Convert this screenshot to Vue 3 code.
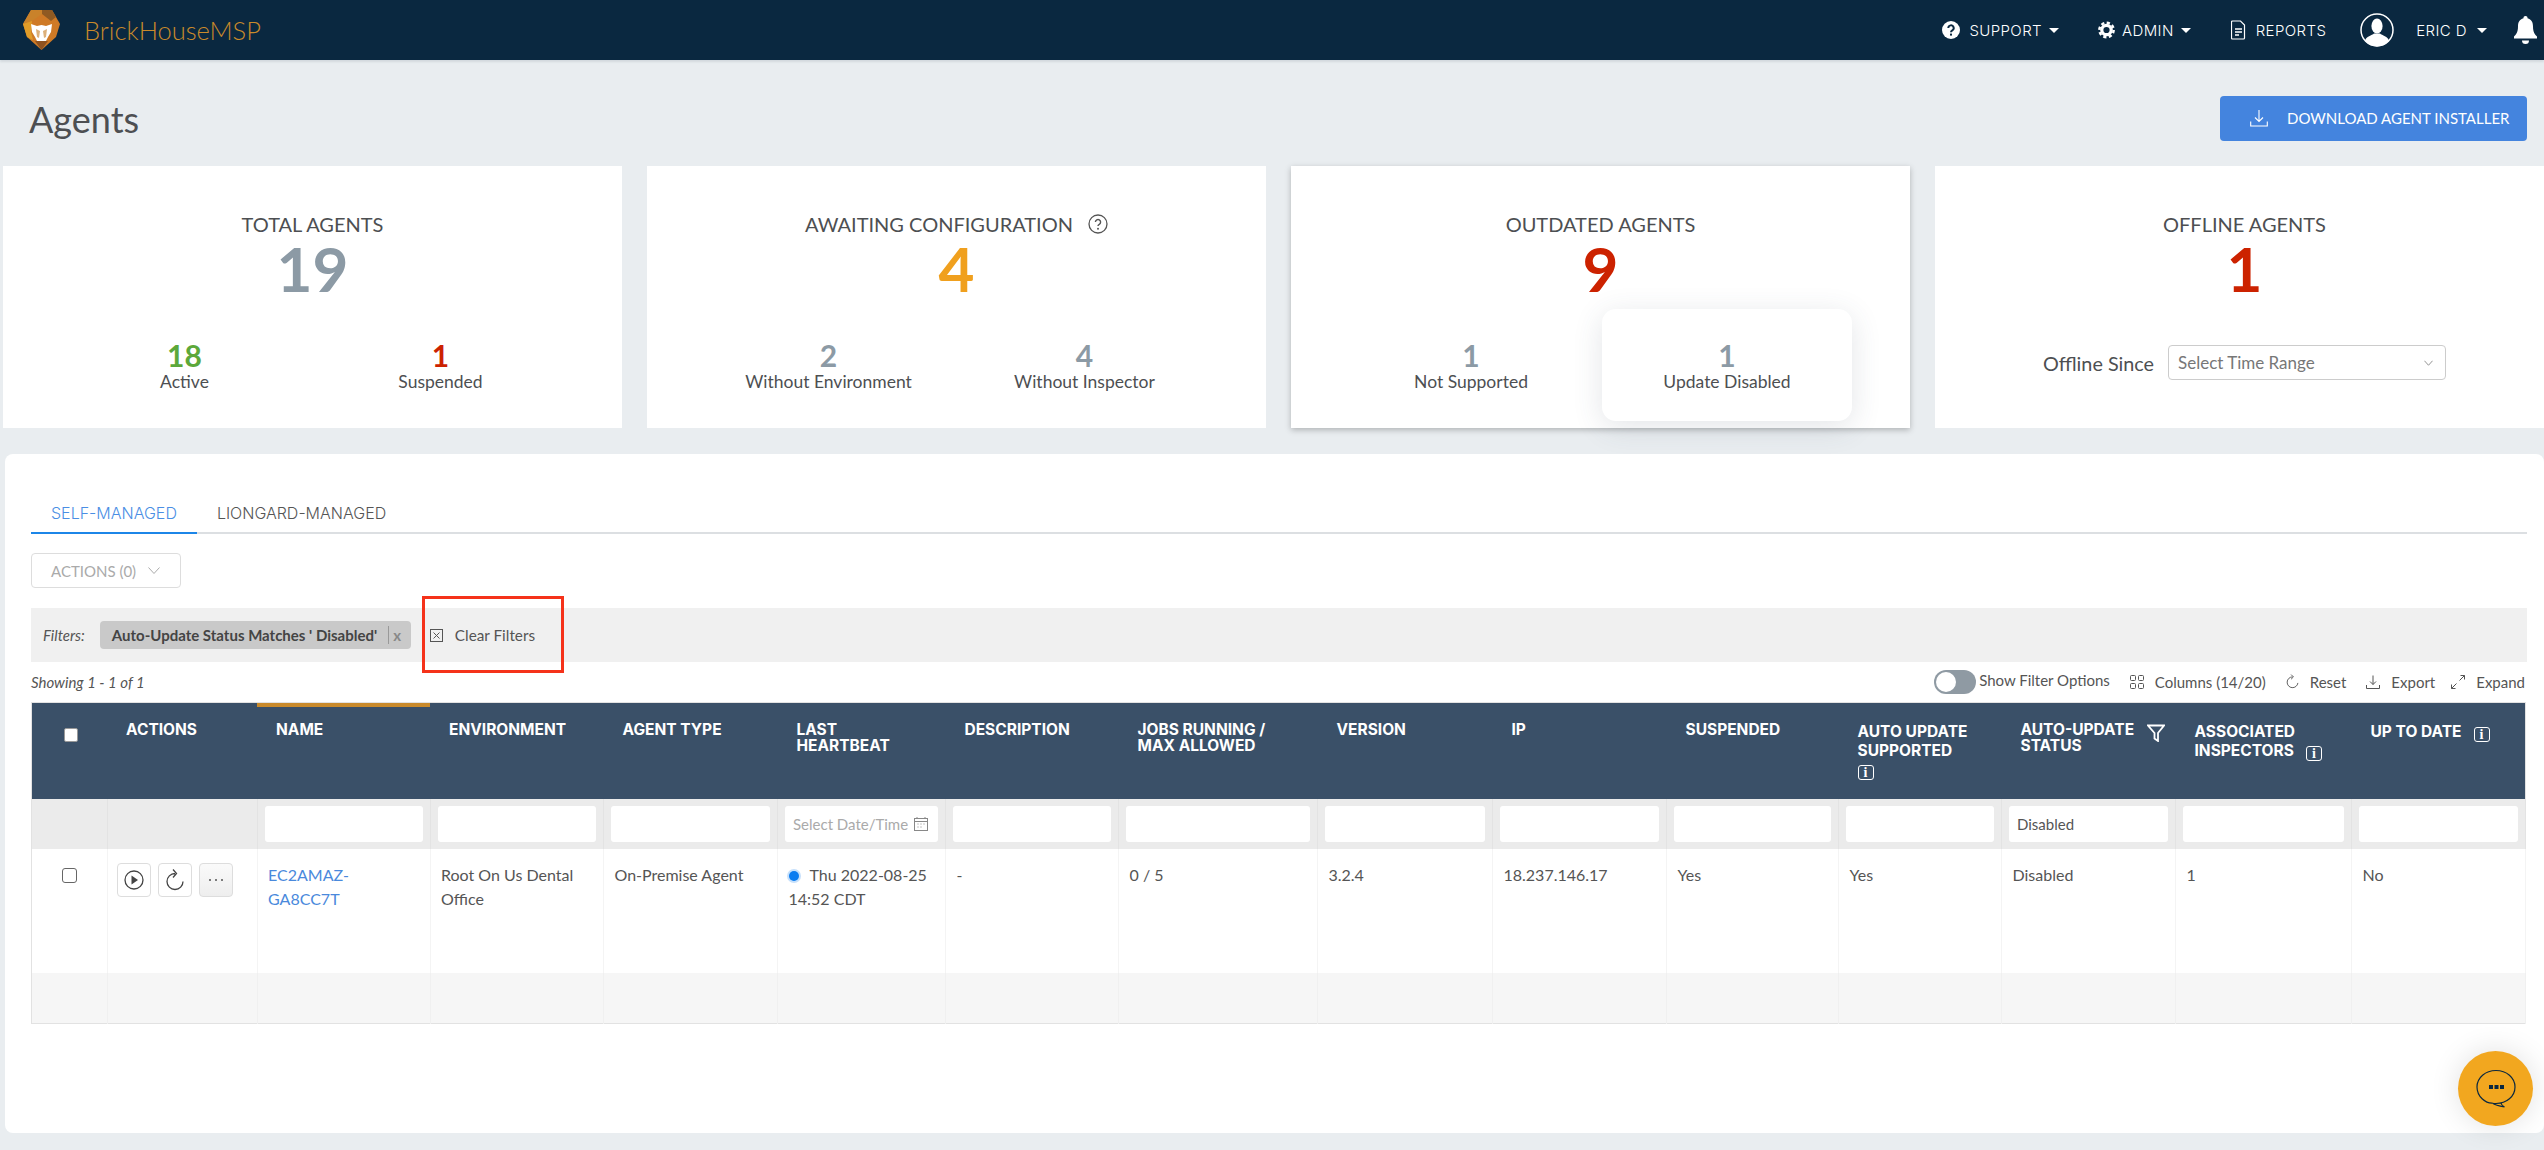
<script setup>
// Table columns: width in px and the header label lines
const columns = [
  { key: 'check', width: 75.5, lines: [] },
  { key: 'actions', width: 150, lines: ['ACTIONS'] },
  { key: 'name', width: 173, lines: ['NAME'], sorted: true, filter: '' },
  { key: 'env', width: 173.5, lines: ['ENVIRONMENT'], filter: '' },
  { key: 'type', width: 174, lines: ['AGENT TYPE'], filter: '' },
  { key: 'heartbeat', width: 168, lines: ['LAST', 'HEARTBEAT'], date: true },
  { key: 'desc', width: 173, lines: ['DESCRIPTION'], filter: '' },
  { key: 'jobs', width: 199, lines: ['JOBS RUNNING /', 'MAX ALLOWED'], filter: '' },
  { key: 'version', width: 175, lines: ['VERSION'], filter: '' },
  { key: 'ip', width: 174, lines: ['IP'], filter: '' },
  { key: 'suspended', width: 172, lines: ['SUSPENDED'], filter: '' },
  { key: 'supported', width: 163, lines: ['AUTO UPDATE', 'SUPPORTED'], info: 'below', tall: true, filter: '' },
  { key: 'status', width: 174, lines: ['AUTO-UPDATE', 'STATUS'], funnel: true, filter: 'Disabled' },
  { key: 'inspectors', width: 176, lines: ['ASSOCIATED', 'INSPECTORS'], info: 'inline', tall: true, filter: '' },
  { key: 'uptodate', width: 174, lines: ['UP TO DATE'], info: 'inline', tall: true, filter: '' }
]

const plainCells = [
  { key: 'env', lines: ['Root On Us Dental', 'Office'] },
  { key: 'type', lines: ['On-Premise Agent'] }
]

const restCells = ['-', '0 / 5', '3.2.4', '18.237.146.17', 'Yes', 'Yes', 'Disabled', '1', 'No']

const cards = [
  { title: 'TOTAL AGENTS', value: 19, tone: 'grey', subs: [
    { value: 18, label: 'Active', tone: 'green' },
    { value: 1, label: 'Suspended', tone: 'red' }
  ] },
  { title: 'AWAITING CONFIGURATION', help: true, value: 4, tone: 'orange', subs: [
    { value: 2, label: 'Without Environment', tone: 'grey' },
    { value: 4, label: 'Without Inspector', tone: 'grey' }
  ] },
  { title: 'OUTDATED AGENTS', value: 9, tone: 'red', raised: true, subs: [
    { value: 1, label: 'Not Supported', tone: 'grey' },
    { value: 1, label: 'Update Disabled', tone: 'grey', active: true }
  ] },
  { title: 'OFFLINE AGENTS', value: 1, tone: 'red', offline: true }
]
</script>

<template>
  <div class="page">
    <header class="nav">
      <svg class="logo" viewBox="0 0 37 40" width="37" height="40">
        <polygon points="8,0 29,0 37,14 33,27 18.500,40 4,27 0,14" fill="#cf7a26" />
        <polygon points="8,0 19,0 19,4 9,11 0,14" fill="#c9822a" />
        <polygon points="19,0 29,0 33,7 28,11 19,4" fill="#8f5a22" />
        <polygon points="0,14 9,11 8,22 10,30 4,27" fill="#e09c28" />
        <polygon points="12,31 25,31 18.500,40" fill="#8f5220" />
        <polygon points="8,14 14,16 18.500,15 23,16 29,14 28,22 25,27 23,31 14,31 12,27 9,22" fill="#fff" />
        <polygon points="13,19 17,21 16,28 14,27" fill="#dcb07a" />
        <polygon points="24,19 20,21 21,28 23,27" fill="#dcb07a" />
      </svg>
      <span class="brand">BrickHouseMSP</span>
      <nav class="nav-right">
        <svg class="nav-ico i-support" viewBox="0 0 18 18" width="18" height="18">
          <circle cx="9" cy="9" r="9" fill="#fff" />
          <path d="M6.300 7a2.700 2.700 0 1 1 4 2.400c-.9.500-1.300 1-1.300 1.900" fill="none" stroke="#0a2840" stroke-width="2" />
          <rect x="8" y="12.600" width="2" height="2" fill="#0a2840" />
        </svg>
        <span class="nav-text t-support">SUPPORT</span>
        <i class="caret"></i>
        <svg class="nav-ico i-admin" viewBox="0 0 18 18" width="17" height="18">
          <circle cx="9" cy="9" r="5" fill="none" stroke="#fff" stroke-width="3.400" />
          <circle cx="9" cy="9" r="7.600" fill="none" stroke="#fff" stroke-width="2.600" stroke-dasharray="3.400 2.570" />
        </svg>
        <span class="nav-text t-admin">ADMIN</span>
        <i class="caret"></i>
        <svg class="nav-ico i-reports" viewBox="0 0 15 20" width="15" height="20">
          <path d="M1.500 1h8l4 4v13a1 1 0 0 1-1 1h-11a1 1 0 0 1-1-1V2a1 1 0 0 1 1-1z" fill="none" stroke="#fff" stroke-width="1.200" />
          <path d="M4 9h7M4 12h7M4 15h4" stroke="#fff" stroke-width="1.300" />
        </svg>
        <span class="nav-text t-reports">REPORTS</span>
        <svg class="nav-ico i-avatar" viewBox="0 0 34 34" width="34" height="34">
          <circle cx="17" cy="17" r="16" fill="#0a2840" stroke="#fff" stroke-width="1.500" />
          <ellipse cx="17" cy="13" rx="5.600" ry="7.600" fill="#fff" />
          <path d="M5 28c1-5 7-5.500 9-7.500h6c2 2 8 2.500 9 7.500a16 16 0 0 1-24 0z" fill="#fff" />
        </svg>
        <span class="nav-text t-user">ERIC D</span>
        <i class="caret c-user"></i>
        <svg class="nav-ico i-bell" viewBox="0 0 23 28" width="23" height="28">
          <path d="M11.500 0a2 2 0 0 1 2 2.300c4 1 5.500 4.200 5.500 8.200 0 6 2 8 4 10v2H0v-2c2-2 4-4 4-10 0-4 1.500-7.200 5.500-8.200a2 2 0 0 1 2-2.300z" fill="#fff" />
          <path d="M8 24.500h7a3.500 3.500 0 0 1-7 0z" fill="#fff" />
        </svg>
      </nav>
    </header>

    <div class="title-row">
      <h1>Agents</h1>
      <button class="download">
        <svg viewBox="0 0 18 18" width="18" height="18">
          <path d="M9 1v11M5 8.500l4 4 4-4M.7 12.500v4.500h16.600v-4.500" fill="none" stroke="#fff" stroke-width="1.100" />
        </svg>
        <span>DOWNLOAD AGENT INSTALLER</span>
      </button>
    </div>

    <section class="cards">
      <div v-for="card in cards" :key="card.title" class="card" :class="{ raised: card.raised }">
        <div class="card-title">
          {{ card.title }}
          <svg v-if="card.help" class="help" viewBox="0 0 20 20" width="20" height="20">
            <circle cx="10" cy="10" r="9" fill="none" stroke="#555" stroke-width="1.300" />
            <path d="M7.400 8a2.600 2.600 0 1 1 3.900 2.300c-.9.500-1.300 1-1.300 1.800" fill="none" stroke="#555" stroke-width="1.400" />
            <circle cx="10" cy="14.700" r="1" fill="#555" />
          </svg>
        </div>
        <div class="card-value" :class="card.tone">{{ card.value }}</div>
        <div v-if="card.subs" class="subs">
          <div v-for="sub in card.subs" :key="sub.label" class="sub" :class="{ active: sub.active }">
            <div class="sub-value" :class="sub.tone">{{ sub.value }}</div>
            <div class="sub-label">{{ sub.label }}</div>
          </div>
        </div>
        <div v-if="card.offline" class="offline">
          <span>Offline Since</span>
          <div class="range">
            <span>Select Time Range</span>
            <svg viewBox="0 0 10 6" width="9" height="6"><path d="M.5.500 5 5.500 9.500.500" fill="none" stroke="#888" /></svg>
          </div>
        </div>
      </div>
    </section>

    <section class="panel">
      <div class="tabs">
        <div class="tab on">SELF-MANAGED</div>
        <div class="tab">LIONGARD-MANAGED</div>
      </div>

      <button class="bulk">
        <span>ACTIONS (0)</span>
        <svg viewBox="0 0 12 7" width="12" height="7"><path d="M.5.500 6 6.500 11.500.500" fill="none" stroke="#aaa" /></svg>
      </button>

      <div class="filters">
        <em>Filters:</em>
        <span class="chip">
          <b>Auto-Update Status Matches ' Disabled'</b>
          <i class="chip-x">x</i>
        </span>
        <svg class="clear-ico" viewBox="0 0 13 13" width="13" height="13">
          <rect x=".5" y=".5" width="12" height="12" fill="none" stroke="#555" />
          <path d="M3.500 3.500l6 6M9.500 3.500l-6 6" stroke="#555" />
        </svg>
        <span class="clear">Clear Filters</span>
      </div>

      <div class="toolbar">
        <em class="showing">Showing 1 - 1 of 1</em>
        <div class="tools">
          <span class="toggle"><i></i></span>
          <span class="show-opts">Show Filter Options</span>
          <svg class="tool-ico first" viewBox="0 0 14 14" width="14" height="14">
            <g fill="none" stroke="#555">
              <rect x=".5" y=".5" width="5" height="5" rx="1" />
              <rect x="8.500" y=".5" width="5" height="5" rx="1" />
              <rect x=".5" y="8.500" width="5" height="5" rx="1" />
              <rect x="8.500" y="8.500" width="5" height="5" rx="1" />
            </g>
          </svg>
          <span>Columns (14/20)</span>
          <svg class="tool-ico" viewBox="0 0 14 16" width="13" height="16">
            <path d="M7 2.500A5.800 5.800 0 1 0 12.800 9M5.500 0l2.500 2.500-2.500 2.500" fill="none" stroke="#555" />
          </svg>
          <span>Reset</span>
          <svg class="tool-ico" viewBox="0 0 14 14" width="14" height="14">
            <path d="M7 .5v9M4 6.500l3 3 3-3M.5 10v3.500h13V10" fill="none" stroke="#555" />
          </svg>
          <span>Export</span>
          <svg class="tool-ico expand" viewBox="0 0 14 14" width="14" height="14">
            <path d="M8.500 5.500l5-5M9.500.5h4v4M5.500 8.500l-5 5M.5 9.500v4h4" fill="none" stroke="#555" />
          </svg>
          <span class="last">Expand</span>
        </div>
      </div>

      <table class="grid">
        <colgroup>
          <col v-for="col in columns" :key="col.key" :style="{ width: col.width + 'px' }" />
        </colgroup>
        <thead>
          <tr class="head">
            <th v-for="col in columns" :key="col.key" :class="{ sorted: col.sorted, tall: col.tall, shifted: col.funnel, tight: col.key === 'supported' }">
              <span v-if="col.key === 'check'" class="head-check"></span>
              <template v-for="(line, i) in col.lines" :key="line">
                <br v-if="i > 0" />{{ line }}
              </template>
              <span v-if="col.info === 'inline'" class="info">i</span>
              <div v-if="col.info === 'below'"><span class="info flush">i</span></div>
              <svg v-if="col.funnel" class="funnel" viewBox="0 0 18 18" width="18" height="18">
                <path d="M1 1.500h16L11 9v8L7.500 14.500V9z" fill="none" stroke="#fff" stroke-width="1.800" />
              </svg>
            </th>
          </tr>
          <tr class="filter-row">
            <th v-for="col in columns" :key="col.key">
              <div v-if="col.filter !== undefined" class="filter-input">{{ col.filter }}</div>
              <div v-else-if="col.date" class="filter-input date">
                <span>Select Date/Time</span>
                <svg viewBox="0 0 14 14" width="14" height="14">
                  <rect x=".5" y="1.500" width="13" height="12" fill="none" stroke="#888" />
                  <path d="M.5 4.500h13M3 0v2M11 0v2M3.500 7h1M6.500 7h1M9.500 7h1M3.500 10h1M6.500 10h1" stroke="#888" />
                </svg>
              </div>
            </th>
          </tr>
        </thead>
        <tbody>
          <tr class="row">
            <td class="row-check"><span></span></td>
            <td class="row-buttons">
              <div class="row-actions">
                <button>
                  <svg viewBox="0 0 20 20" width="20" height="20">
                    <circle cx="10" cy="10" r="9" fill="none" stroke="#444" stroke-width="1.300" />
                    <polygon points="7.500,5.500 14,10 7.500,14.500" fill="#444" />
                  </svg>
                </button>
                <button>
                  <svg viewBox="0 0 20 23" width="20" height="23">
                    <path d="M10 5.500A8 8 0 1 0 18 13.500M8 1.500l3.500 4-3.500 4" fill="none" stroke="#444" stroke-width="1.300" />
                  </svg>
                </button>
                <button class="more">
                  <svg viewBox="0 0 16 4" width="16" height="4">
                    <circle cx="2" cy="2" r="1" fill="#555" /><circle cx="8" cy="2" r="1" fill="#555" /><circle cx="14" cy="2" r="1" fill="#555" />
                  </svg>
                </button>
              </div>
            </td>
            <td><a class="link">EC2AMAZ-<br />GA8CC7T</a></td>
            <td v-for="cell in plainCells" :key="cell.key">
              <template v-for="(line, i) in cell.lines" :key="line">
                <br v-if="i > 0" />{{ line }}
              </template>
            </td>
            <td class="beat"><i class="dot"></i>Thu 2022-08-25<br />14:52 CDT</td>
            <td v-for="(cell, i) in restCells" :key="i">{{ cell }}</td>
          </tr>
          <tr class="stripe">
            <td v-for="col in columns" :key="col.key"></td>
          </tr>
        </tbody>
      </table>
    </section>

    <div class="highlight"></div>

    <button class="chat">
      <svg viewBox="0 0 40 40" width="40" height="40">
        <path d="M20 1.500c10.500 0 19 7 19 16.500s-8.500 16.500-19 16.500c-1.500 0-2.500 0-3.500-.3 3 2 8 3 12 3.800-2-1-3.200-2-3.700-4.500" fill="none" stroke="#0a2840" stroke-width="1.200" />
        <path d="M20 1.500C9.500 1.500 1 8.500 1 18s8.500 16.500 15.500 16.200" fill="none" stroke="#0a2840" stroke-width="1.200" />
        <rect x="13" y="16" width="4" height="4" fill="#0a2840" /><rect x="18.500" y="16" width="4" height="4" fill="#0a2840" /><rect x="24" y="16" width="4" height="4" fill="#0a2840" />
      </svg>
    </button>
  </div>
</template>

<style scoped>
.page {
  position: relative;
  width: 2544px;
  height: 1150px;
  overflow: hidden;
  background: #e9edf0;
  font-family: Lato, "Liberation Sans", sans-serif;
  color: #555;
}

/* Top bar */
.nav {
  display: flex;
  align-items: center;
  height: 60px;
  padding-left: 23px;
  background: #0a2840;
  box-shadow: 0 2px 2px #d3d9de;
}
.logo { margin-right: 24px; }
.brand {
  font-size: 25.500px;
  font-weight: 300;
  color: #c98a2b;
}
.nav-right {
  display: flex;
  align-items: center;
  margin-left: auto;
  padding-right: 7px;
}
.nav-text {
  font-family: Inter, sans-serif;
  font-size: 15px;
  font-weight: 300;
  letter-spacing: .4px;
  color: #fff;
}
.caret {
  width: 0;
  height: 0;
  margin-left: 7px;
  border: 5px solid transparent;
  border-top-color: #fff;
  border-bottom: 0;
}
.t-support { margin-left: 9px; }
.i-admin { margin-left: 39px; }
.t-admin { margin-left: 7px; }
.i-reports { margin-left: 40px; }
.t-reports { margin-left: 10px; }
.i-avatar { margin-left: 34px; }
.t-user { margin-left: 22px; }
.c-user { margin-left: 10px; }
.i-bell { margin-left: 27px; }

/* Title */
.title-row {
  display: flex;
  justify-content: space-between;
  align-items: flex-start;
  height: 106px;
  padding: 36px 17px 0 29px;
  box-sizing: border-box;
}
h1 {
  margin: 0;
  font-size: 36px;
  font-weight: 400;
  line-height: 46px;
  color: #4d4f52;
}
.download {
  display: flex;
  align-items: center;
  width: 307px;
  height: 45px;
  padding: 0 0 2px 30px;
  border: 0;
  border-radius: 4px;
  background: #4484de;
  color: #fff;
  font-family: Lato, sans-serif;
  font-size: 15px;
}
.download span { margin-left: 19px; }

/* Stat cards */
.cards {
  display: grid;
  grid-template-columns: repeat(4, 619px);
  column-gap: 25px;
  padding-left: 3px;
}
.card {
  height: 262px;
  padding-top: 46px;
  box-sizing: border-box;
  background: #fff;
  text-align: center;
}
.card.raised { box-shadow: 0 2px 6px rgba(0, 0, 0, .25); }
.card.raised .subs { margin-left: -3px; }
.card-title {
  display: flex;
  justify-content: center;
  align-items: center;
  font-size: 20px;
  line-height: 24px;
  color: #4d4f52;
}
.help { margin-left: 15px; }
.card-value {
  height: 66px;
  margin-bottom: 7px;
  font-size: 62px;
  font-weight: 700;
  line-height: 64px;
}
.grey { color: #8c9aa5; }
.orange { color: #f0a01e; }
.red { color: #cc2200; }
.green { color: #5ca83a; }
.subs {
  display: flex;
  justify-content: center;
  gap: 6px;
}
.sub {
  width: 250px;
  height: 112px;
  padding-top: 29px;
  box-sizing: border-box;
  border-radius: 14px;
}
.sub.active {
  background: #fff;
  box-shadow: 0 6px 30px rgba(60, 70, 90, .14);
}
.sub-value {
  font-size: 30px;
  font-weight: 700;
  line-height: 34px;
}
.sub-label {
  margin-top: 1px;
  font-size: 17.500px;
  line-height: 18px;
  color: #4d4f52;
}
.offline {
  display: flex;
  justify-content: center;
  align-items: center;
  gap: 14px;
  padding-top: 36px;
  font-size: 19.800px;
  color: #4d4f52;
}
.range {
  display: flex;
  justify-content: space-between;
  align-items: center;
  width: 278px;
  height: 35px;
  padding: 0 12px 0 9px;
  box-sizing: border-box;
  border: 1px solid #ccc;
  border-radius: 4px;
  font-size: 17px;
  color: #777;
}

/* Table panel */
.panel {
  width: 2539px;
  height: 679px;
  margin: 26px 0 0 5px;
  padding: 40px 17px 0 26px;
  box-sizing: border-box;
  border-radius: 8px;
  background: #fff;
}
.tabs {
  display: flex;
  height: 40px;
  box-sizing: border-box;
  border-bottom: 2px solid #dcdfe2;
}
.tab {
  height: 40px;
  padding: 0 20px;
  box-sizing: border-box;
  font-family: Inter, sans-serif;
  font-size: 16px;
  font-weight: 300;
  line-height: 38px;
  color: #555;
}
.tab.on {
  border-bottom: 2px solid #1c86e8;
  color: #4a8ee4;
}
.bulk {
  display: flex;
  justify-content: space-between;
  align-items: center;
  width: 150px;
  height: 35px;
  margin-top: 19px;
  padding: 0 20px 0 19px;
  box-sizing: border-box;
  border: 1px solid #ddd;
  border-radius: 4px;
  background: #fff;
  color: #aaa;
  font-family: Lato, sans-serif;
  font-size: 15px;
}
.filters {
  display: flex;
  align-items: center;
  height: 54px;
  margin-top: 20px;
  padding-left: 12px;
  background: #f0f0f0;
  font-size: 15px;
}
.chip {
  display: flex;
  align-items: center;
  width: 311px;
  height: 28px;
  margin-left: 15px;
  padding-left: 12px;
  box-sizing: border-box;
  border-radius: 4px;
  background: #c9c9c9;
  color: #444;
  white-space: nowrap;
}
.chip-x {
  margin-left: 11px;
  padding-left: 4px;
  border-left: 1px solid #999;
  color: #888;
  font-style: normal;
  font-weight: 700;
}
.clear-ico { margin-left: 19px; }
.clear { margin-left: 12px; font-size: 15.300px; }

.toolbar {
  display: flex;
  justify-content: space-between;
  align-items: center;
  height: 40px;
  font-size: 15px;
}
.tools {
  display: flex;
  align-items: center;
  padding-right: 2px;
}
.toggle {
  display: block;
  width: 42px;
  height: 24px;
  margin-right: 3px;
  border-radius: 12px;
  background: #8f9aa3;
}
.toggle i {
  display: block;
  width: 20px;
  height: 20px;
  margin: 2px;
  border-radius: 50%;
  background: #fff;
}
.show-opts { margin-top: -4px; }
.tool-ico { margin: 0 11px 0 20px; }
.tool-ico.first { margin-left: 20px; }
.tool-ico.expand { margin-left: 16px; }

/* Agents table */
.grid {
  width: 2494px;
  table-layout: fixed;
  border-collapse: collapse;
  border: 1px solid #e2e2e2;
}
.head { height: 96px; background: #3a5068; }
.head th {
  position: relative;
  padding: 19px 0 0 19px;
  box-sizing: border-box;
  vertical-align: top;
  text-align: left;
  font-family: Inter, sans-serif;
  font-size: 15.500px;
  font-weight: 700;
  line-height: 16px;
  color: #fff;
}
.head th.tall { padding-top: 19px; line-height: 19px; }
.head th.shifted { padding-top: 19px; }
.head th.sorted::before {
  content: "";
  position: absolute;
  top: 0;
  left: 0;
  right: 0;
  height: 4px;
  background: #c98a2b;
}
.head-check {
  display: block;
  width: 14px;
  height: 14px;
  margin: 6px 0 0 13px;
  border: 1px solid #999;
  border-radius: 2px;
  box-sizing: border-box;
  background: #fff;
}
.info {
  display: inline-block;
  width: 16px;
  height: 15px;
  margin-left: 12px;
  border: 1px solid #fff;
  border-radius: 3px;
  box-sizing: border-box;
  font-family: "Liberation Serif", serif;
  font-size: 14px;
  font-weight: 700;
  line-height: 13px;
  text-align: center;
  vertical-align: -2px;
}
.info.flush { margin-left: 0; }
.funnel { position: absolute; top: 21px; right: 11px; }

.filter-row { height: 50px; background: #ebebeb; }
.filter-row th {
  padding: 7px;
  box-sizing: border-box;
  border-right: 1px solid #e3e3e3;
}
.filter-input {
  height: 36px;
  padding: 0 8px;
  box-sizing: border-box;
  border-radius: 3px;
  background: #fff;
  text-align: left;
  font-size: 15px;
  font-weight: 400;
  line-height: 36px;
  color: #555;
}
.filter-input.date {
  display: flex;
  justify-content: space-between;
  align-items: center;
  padding: 0 10px 0 8px;
  color: #aaa;
  white-space: nowrap;
}
.row { height: 124px; }
.row td {
  padding: 14px 10.500px 0;
  box-sizing: border-box;
  vertical-align: top;
  border-right: 1px solid #f4f4f4;
  font-size: 16px;
  line-height: 24px;
  color: #555;
}
.row td.row-buttons { padding-left: 10px; }
.row-check span {
  display: block;
  width: 15px;
  height: 15px;
  margin: 5px 0 0 19px;
  border: 1px solid #666;
  border-radius: 3px;
  box-sizing: border-box;
}
.row-actions {
  display: flex;
  gap: 7px;
  margin-left: -1px;
}
.row-actions button {
  display: flex;
  justify-content: center;
  align-items: center;
  width: 34px;
  height: 34px;
  padding: 0;
  border: 1px solid #ddd;
  border-radius: 4px;
  background: #fff;
}
.row-actions button.more { background: linear-gradient(#fafafa, #eee); }
.link { color: #4a89dc; }
.dot {
  display: inline-block;
  width: 10px;
  height: 10px;
  margin: 0 11px 0 0;
  border-radius: 50%;
  background: #0a7cf0;
  box-shadow: 0 0 0 2px #c6e0fb;
}
.beat { white-space: nowrap; }
.stripe { height: 51px; background: #f6f6f6; }
.stripe td { border-right: 1px solid #f0f0f0; }

/* Annotation box from the screenshot */
.highlight {
  position: absolute;
  top: 596px;
  left: 422px;
  width: 142px;
  height: 77px;
  box-sizing: border-box;
  border: 3px solid #f5321a;
}

.chat {
  position: absolute;
  top: 1051px;
  left: 2458px;
  display: flex;
  justify-content: center;
  align-items: center;
  width: 75px;
  height: 75px;
  padding: 0;
  border: 0;
  border-radius: 50%;
  background: #f2a71f;
  box-shadow: 0 0 30px rgba(0, 0, 0, .12);
}
</style>

<style>
html, body { margin: 0; background: #e9edf0; }
</style>
